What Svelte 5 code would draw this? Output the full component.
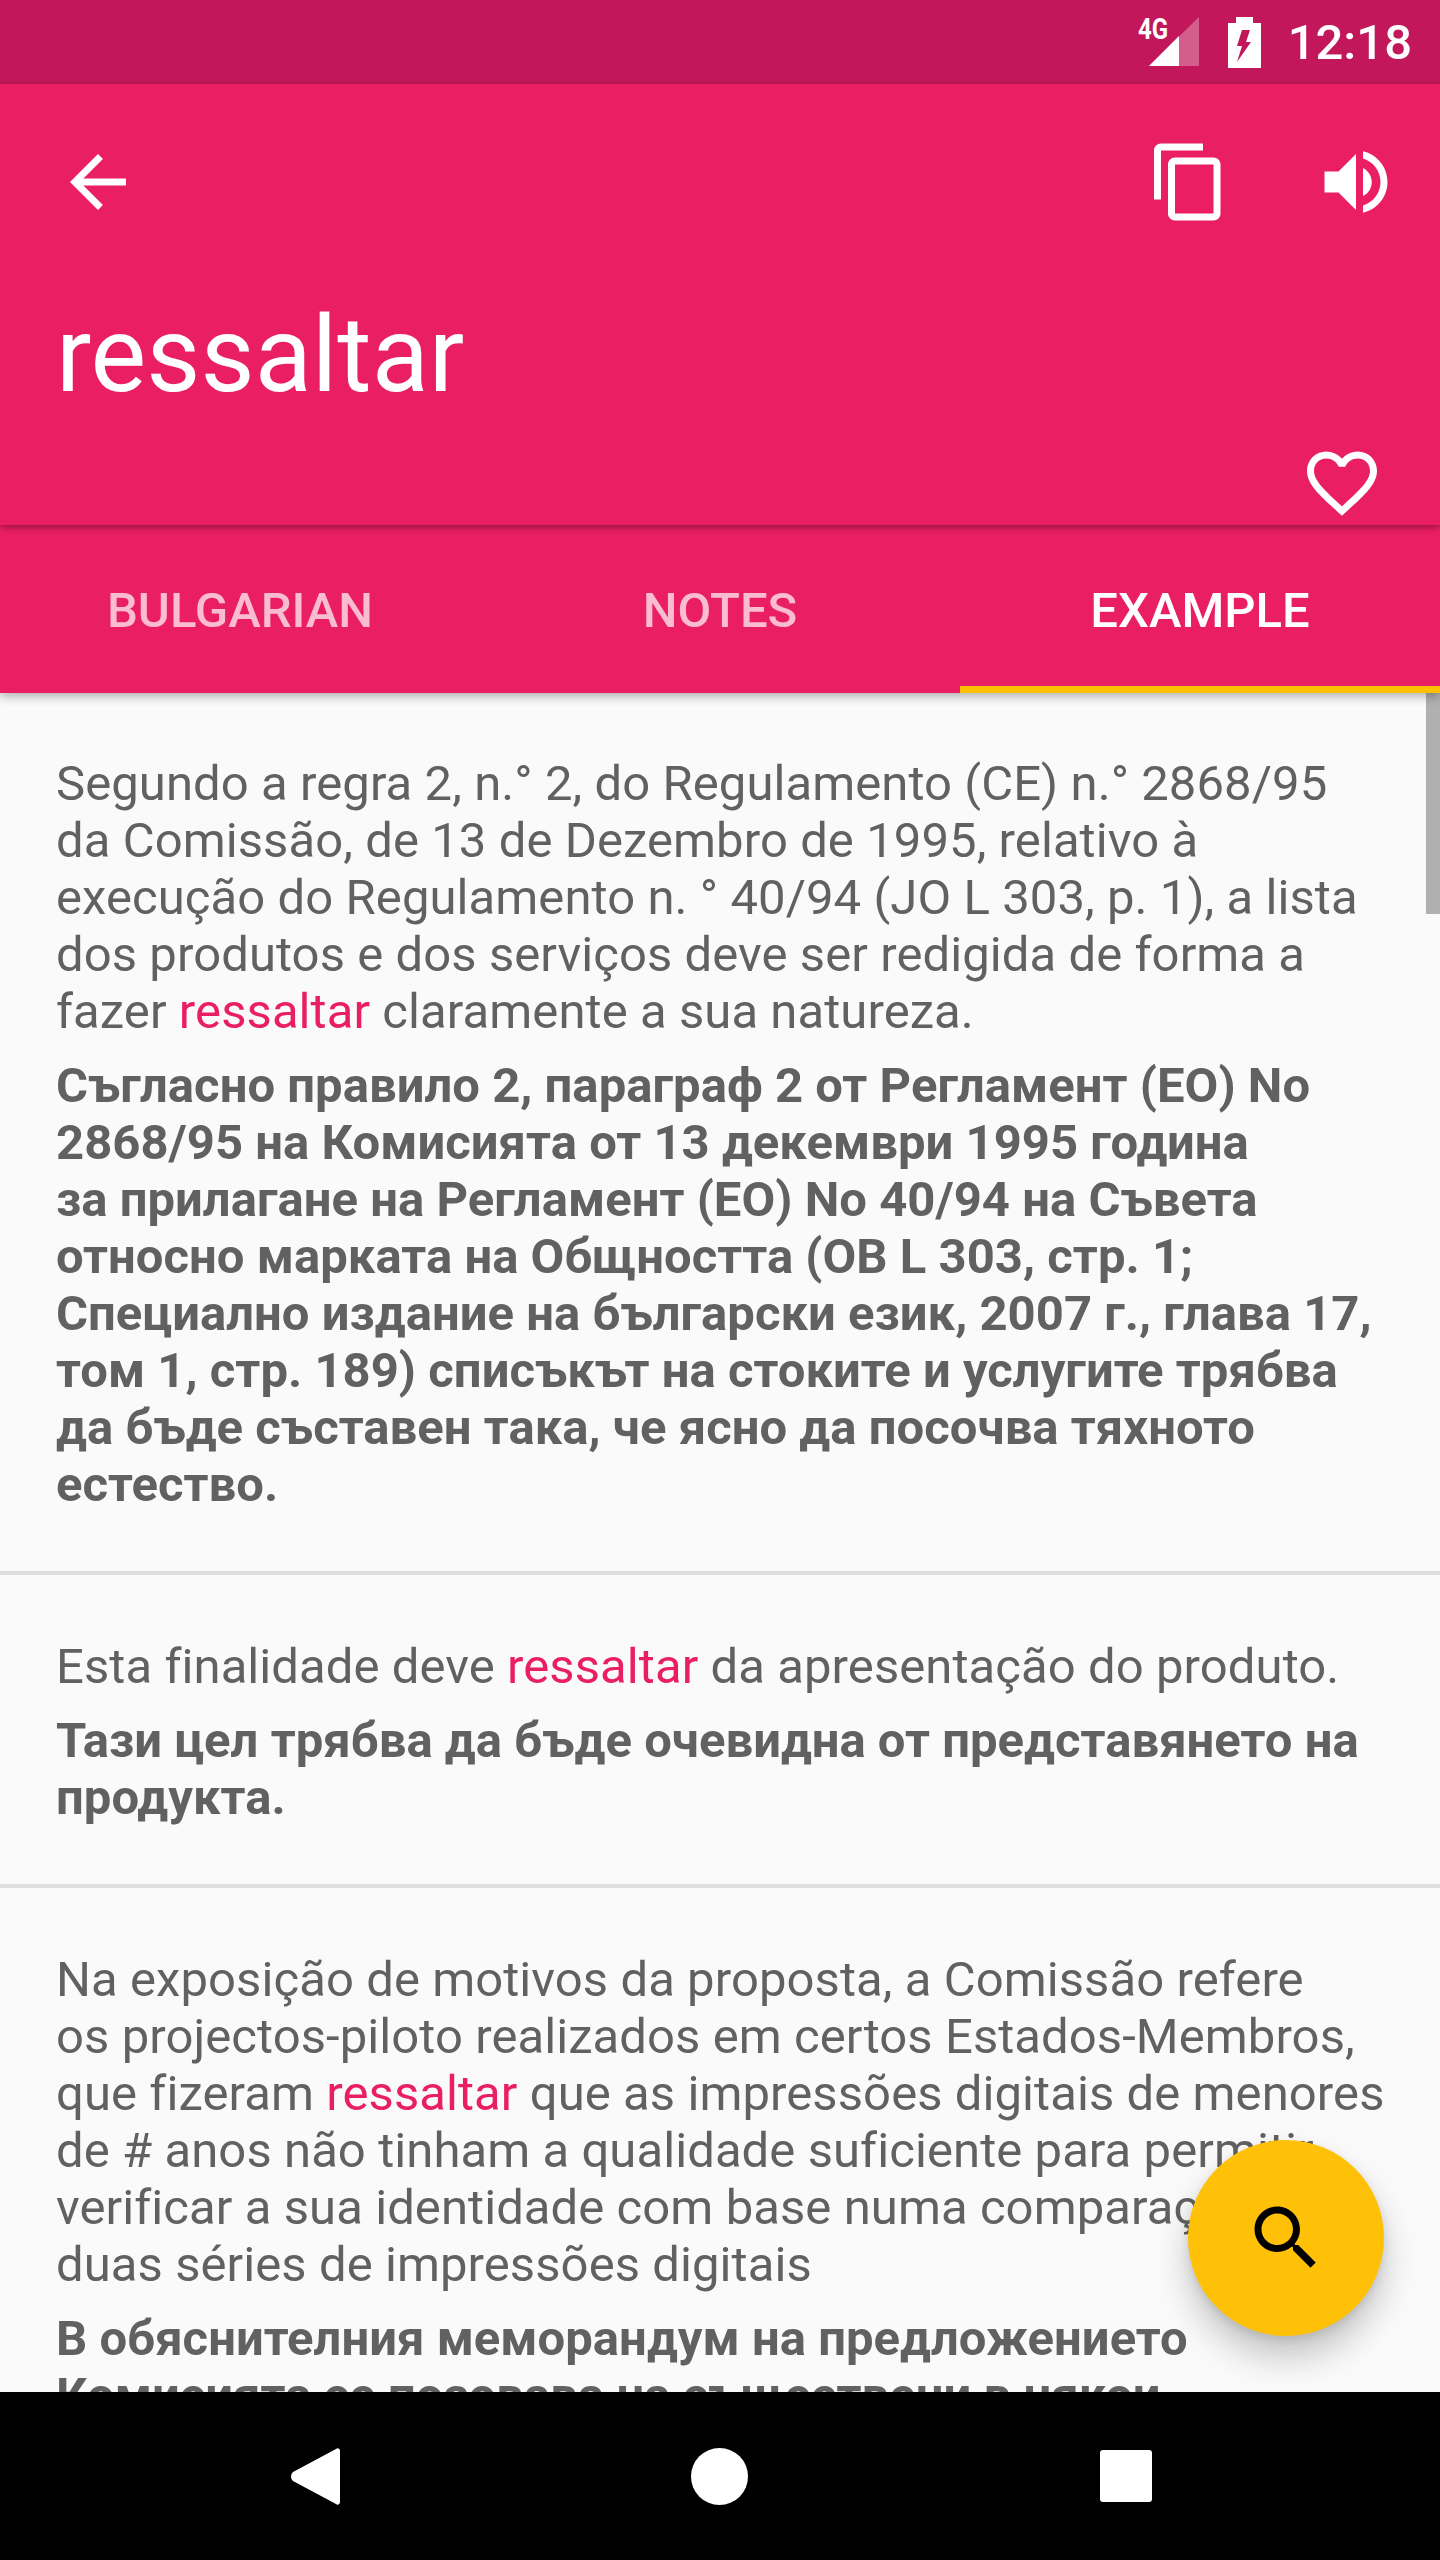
<script lang="ts">
	const tabs = [
		{ label: 'BULGARIAN', active: false },
		{ label: 'NOTES', active: false },
		{ label: 'EXAMPLE', active: true }
	];
</script>

<div class="screen">
	<div class="status">
		<div class="signal">
			<span class="net">4G</span>
			<svg viewBox="0 0 50 49" width="50" height="49">
				<path d="M50 0V49H0z" fill="#fff" opacity=".3" />
				<path d="M30 19V49H0z" fill="#fff" />
			</svg>
		</div>
		<svg class="battery" viewBox="0 0 33 51" width="33" height="51">
			<path d="M8 0h17v6h8v45H0V6h8z" fill="#fff" />
			<path d="M14 13h8l-4 12h5L9 45l5-16H9z" fill="#c2185b" />
		</svg>
		<span class="clock">12:18</span>
	</div>

	<header class="head">
		<div class="toolbar">
			<svg class="icon" viewBox="0 0 24 24"><path d="M20 11H7.830l5.590-5.590L12 4l-8 8 8 8 1.410-1.410L7.830 13H20v-2z" /></svg>
			<div class="actions">
				<svg class="icon" viewBox="0 0 24 24"><path d="M16 1H4c-1.100 0-2 .9-2 2v14h2V3h12V1zm3 4H8c-1.100 0-2 .9-2 2v14c0 1.100.9 2 2 2h11c1.100 0 2-.9 2-2V7c0-1.100-.9-2-2-2zm0 16H8V7h11v14z" /></svg>
				<svg class="icon" viewBox="0 0 24 24"><path d="M3 9v6h4l5 5V4L7 9H3zm13.500 3c0-1.770-1.020-3.290-2.500-4.030v8.050c1.480-.73 2.500-2.250 2.500-4.020zM14 3.230v2.060c2.890.86 5 3.540 5 6.710s-2.110 5.850-5 6.710v2.060c4.010-.91 7-4.490 7-8.770s-2.990-7.860-7-8.770z" /></svg>
			</div>
		</div>
		<h1>ressaltar</h1>
		<div class="fav">
			<svg class="icon" viewBox="0 0 24 24"><path d="M16.500 3c-1.740 0-3.410.81-4.500 2.090C10.910 3.810 9.240 3 7.500 3 4.420 3 2 5.420 2 8.500c0 3.780 3.400 6.860 8.550 11.540L12 21.350l1.450-1.320C18.600 15.360 22 12.280 22 8.500 22 5.420 19.580 3 16.500 3zm-4.400 15.550l-.1.1-.1-.1C7.140 14.240 4 11.390 4 8.500 4 6.500 5.500 5 7.500 5c1.540 0 3.040.99 3.570 2.360h1.870C13.460 5.990 14.960 5 16.500 5c2 0 3.500 1.500 3.500 3.500 0 2.890-3.140 5.740-7.900 10.050z" /></svg>
		</div>
	</header>

	<nav class="tabs">
		{#each tabs as tab}
			<div class="tab" class:active={tab.active}>{tab.label}</div>
		{/each}
	</nav>

	<main class="content">
		<article>
			<p>Segundo a regra 2, n.° 2, do Regulamento (CE) n.° 2868/95<br />da Comissão, de 13 de Dezembro de 1995, relativo à<br />execução do Regulamento n. ° 40/94 (JO L 303, p. 1), a lista<br />dos produtos e dos serviços deve ser redigida de forma a<br />fazer <em>ressaltar</em> claramente a sua natureza.</p>
			<p class="tr">Съгласно правило 2, параграф 2 от Регламент (ЕО) No<br />2868/95 на Комисията от 13 декември 1995 година<br />за прилагане на Регламент (ЕО) No 40/94 на Съвета<br />относно марката на Общността (OB L 303, стр. 1;<br />Специално издание на български език, 2007 г., глава 17,<br />том 1, стр. 189) списъкът на стоките и услугите трябва<br />да бъде съставен така, че ясно да посочва тяхното<br />естество.</p>
		</article>
		<article>
			<p>Esta finalidade deve <em>ressaltar</em> da apresentação do produto.</p>
			<p class="tr">Тази цел трябва да бъде очевидна от представянето на<br />продукта.</p>
		</article>
		<article>
			<p>Na exposição de motivos da proposta, a Comissão refere<br />os projectos-piloto realizados em certos Estados-Membros,<br />que fizeram <em>ressaltar</em> que as impressões digitais de menores<br />de # anos não tinham a qualidade suficiente para permitir<br />verificar a sua identidade com base numa comparação de<br />duas séries de impressões digitais</p>
			<p class="tr">В обяснителния меморандум на предложението<br />Комисията се позовава на съществени в някои</p>
		</article>
		<div class="scrollbar"></div>
		<button class="fab" aria-label="search">
			<svg class="icon" viewBox="0 0 24 24"><path d="M15.500 14h-.79l-.28-.27C15.410 12.590 16 11.110 16 9.500 16 5.910 13.090 3 9.500 3S3 5.910 3 9.500 5.910 16 9.500 16c1.610 0 3.090-.59 4.230-1.570l.27.28v.79l5 4.990L20.490 19l-4.990-5zm-6 0C7.010 14 5 11.990 5 9.500S7.010 5 9.500 5 14 7.010 14 9.500 11.990 14 9.500 14z" /></svg>
		</button>
	</main>

	<footer class="nav">
		<div class="nav-btn"><svg viewBox="0 0 49 57" width="49" height="57"><path d="M49 3v51c0 2.400-2.400 3.600-4 2L2 33c-2.600-2-2.600-7 0-9L45 1c1.600-1.500 4-.4 4 2z" fill="#fff" /></svg></div>
		<div class="nav-btn"><div class="circle"></div></div>
		<div class="nav-btn"><div class="square"></div></div>
	</footer>
</div>

<style>
	:global(body) {
		margin: 0;
		background: #fafafa;
	}

	.screen {
		display: flex;
		flex-direction: column;
		width: 1440px;
		height: 2560px;
		overflow: hidden;
		font-family: Roboto, sans-serif;
	}

	.status {
		display: flex;
		align-items: center;
		justify-content: flex-end;
		flex-shrink: 0;
		height: 84px;
		padding-right: 28px;
		box-sizing: border-box;
		background: #c2185b;
		color: #fff;
	}

	.signal {
		position: relative;
		display: flex;
		margin-right: 29px;
		padding-bottom: 1px;
	}

	.net {
		position: absolute;
		left: -11px;
		top: -6px;
		font-size: 30px;
		font-weight: 700;
		transform: scaleX(0.8);
		transform-origin: left center;
	}

	.battery {
		margin-right: 27px;
	}

	.clock {
		font-size: 49px;
		font-weight: 500;
	}

	.icon {
		display: block;
		width: 84px;
		height: 84px;
		fill: #fff;
	}

	.head {
		position: relative;
		z-index: 2;
		flex-shrink: 0;
		height: 441px;
		box-sizing: border-box;
		padding: 56px 42px 0 56px;
		background: #e91e63;
		box-shadow: 0 2px 7px rgba(0, 0, 0, 0.38);
	}

	.toolbar {
		display: flex;
		justify-content: space-between;
	}

	.actions {
		display: flex;
		gap: 83px;
	}

	h1 {
		margin: 70px 0 0;
		color: #fff;
		font-size: 105px;
		font-weight: 400;
		line-height: 123px;
	}

	.fav {
		display: flex;
		justify-content: flex-end;
		margin-top: 24px;
		padding-right: 14px;
	}

	.tabs {
		position: relative;
		z-index: 1;
		display: grid;
		grid-template-columns: repeat(3, 1fr);
		flex-shrink: 0;
		height: 168px;
		background: #e91e63;
		box-shadow: 0 3px 10px rgba(0, 0, 0, 0.32);
	}

	.tab {
		display: flex;
		align-items: center;
		justify-content: center;
		box-sizing: border-box;
		padding-top: 2px;
		color: rgba(255, 255, 255, 0.7);
		font-size: 49px;
		font-weight: 500;
	}

	.tab.active {
		border-bottom: 7px solid #ffc107;
		padding-top: 9px;
		color: #fff;
	}

	.content {
		position: relative;
		flex: 1;
		min-height: 0;
		overflow: hidden;
		background: #fafafa;
		color: #616161;
		font-size: 49px;
		line-height: 57px;
		letter-spacing: 0.08px;
	}

	article {
		padding: 62px 56px 58px;
		border-bottom: 4px solid #dedede;
	}

	article + article {
		padding-top: 63px;
	}

	article:last-of-type {
		border-bottom: 0;
	}

	p {
		margin: 0;
		white-space: nowrap;
	}

	.tr {
		margin-top: 17px;
		font-weight: 700;
		letter-spacing: 0.03px;
	}

	em {
		color: #e91e63;
		font-style: normal;
	}

	.scrollbar {
		position: absolute;
		top: 0;
		right: 0;
		width: 14px;
		height: 221px;
		background: #b0b0b0;
	}

	.fab {
		position: absolute;
		right: 56px;
		bottom: 56px;
		display: flex;
		align-items: center;
		justify-content: center;
		width: 196px;
		height: 196px;
		padding: 0;
		border: 0;
		border-radius: 50%;
		background: #ffc107;
		box-shadow: 0 21px 35px rgba(0, 0, 0, 0.22), 0 4px 10px rgba(0, 0, 0, 0.1);
	}

	.fab .icon {
		fill: #000;
	}

	.nav {
		display: flex;
		align-items: center;
		justify-content: center;
		flex-shrink: 0;
		height: 168px;
		background: #000;
	}

	.nav-btn {
		display: flex;
		align-items: center;
		justify-content: center;
		width: 405px;
		height: 84px;
	}

	.circle {
		width: 57px;
		height: 57px;
		margin-right: 2px;
		border-radius: 50%;
		background: #fff;
	}

	.square {
		width: 52px;
		height: 52px;
		margin-left: 2px;
		border-radius: 3px;
		background: #fff;
	}
</style>
